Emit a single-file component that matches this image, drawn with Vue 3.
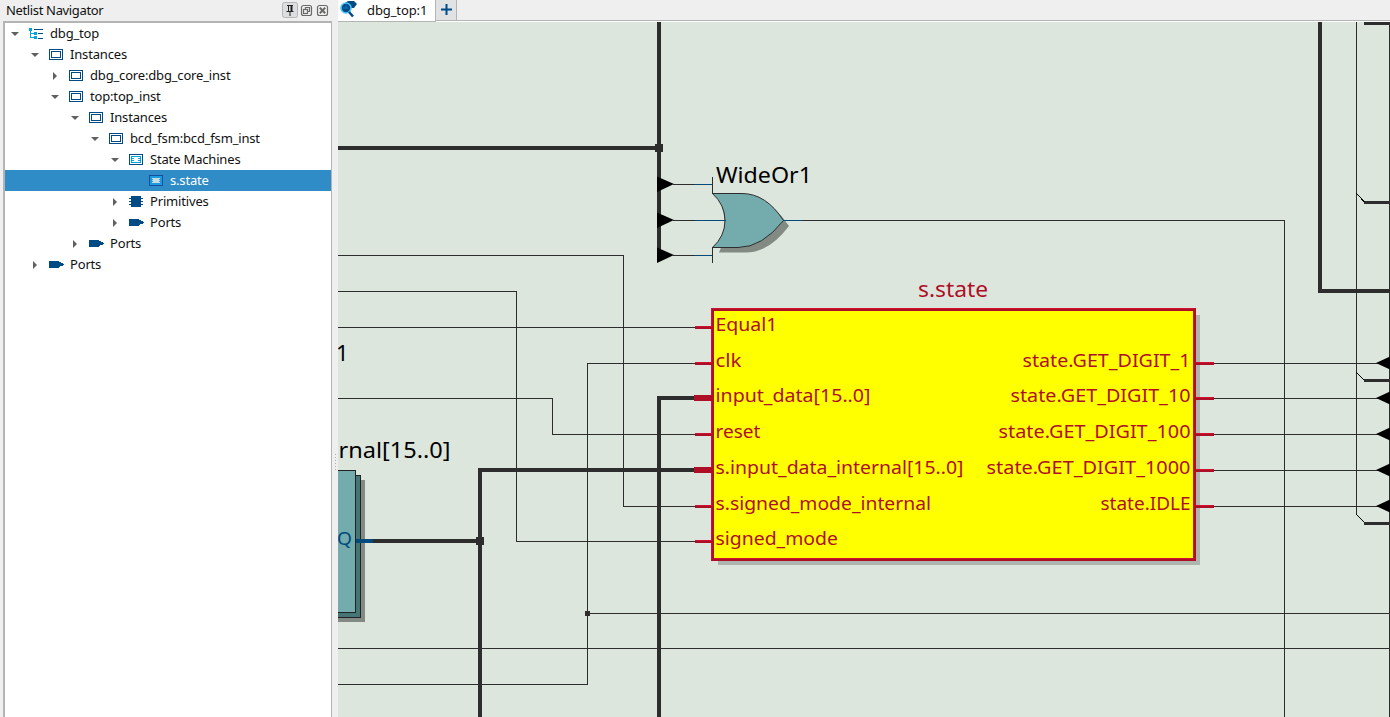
<script setup>
const tree = [
  { label: 'dbg_top', level: 0, open: true, icon: 'tree' },
  { label: 'Instances', level: 1, open: true, icon: 'inst' },
  { label: 'dbg_core:dbg_core_inst', level: 2, open: false, icon: 'inst' },
  { label: 'top:top_inst', level: 2, open: true, icon: 'inst' },
  { label: 'Instances', level: 3, open: true, icon: 'inst' },
  { label: 'bcd_fsm:bcd_fsm_inst', level: 4, open: true, icon: 'inst' },
  { label: 'State Machines', level: 5, open: true, icon: 'fsm' },
  { label: 's.state', level: 6, open: null, icon: 'state', selected: true },
  { label: 'Primitives', level: 5, open: false, icon: 'chip' },
  { label: 'Ports', level: 5, open: false, icon: 'port' },
  { label: 'Ports', level: 3, open: false, icon: 'port' },
  { label: 'Ports', level: 1, open: false, icon: 'port' },
]
const inputs = [
  { t: 'Equal1', y: 327, w: 62 },
  { t: 'clk', y: 363, w: 26 },
  { t: 'input_data[15..0]', y: 398, w: 155 },
  { t: 'reset', y: 434, w: 45 },
  { t: 's.input_data_internal[15..0]', y: 470, w: 248 },
  { t: 's.signed_mode_internal', y: 506, w: 215.5 },
  { t: 'signed_mode', y: 541, w: 122.5 },
].map((p) => ({ ...p, bus: p.t.includes('[') }))
const outputs = [
  { t: 'state.GET_DIGIT_1', y: 363, w: 168 },
  { t: 'state.GET_DIGIT_10', y: 398, w: 180 },
  { t: 'state.GET_DIGIT_100', y: 434, w: 192 },
  { t: 'state.GET_DIGIT_1000', y: 470, w: 204 },
  { t: 'state.IDLE', y: 506, w: 90 },
]
</script>

<template>
  <div class="app">
    <aside class="nav">
      <header class="nav-head">
        <span class="title">Netlist Navigator</span>
        <svg class="tools" width="52" height="21" viewBox="280 0 52 21">
          <rect x="282.5" y="2.500" width="15" height="15" rx="2" fill="#dcdee0" stroke="#b4b6b8" />
          <path d="M287 5.500h6M288.500 5.500v6M286.500 11.500h7M290 12v4" fill="none" stroke="#222" />
          <path d="M291.500 5v6" stroke="#222" stroke-width="2" />
          <g fill="none" stroke="#6a6a68" stroke-width="1.200">
            <rect x="301.500" y="5.500" width="10" height="10" rx="2" />
            <rect x="303.500" y="9.500" width="4" height="4" />
            <path d="M305.500 9V7.500h4v4H308" />
            <rect x="317.500" y="5.500" width="10" height="10" rx="2" />
            <path d="M319.800 7.800l5.400 5.400m0-5.400l-5.400 5.400" stroke-width="2" />
          </g>
        </svg>
      </header>
      <ul class="tree">
        <li v-for="(n, i) in tree" :key="i" :class="['row', 'l' + n.level, { selected: n.selected }]">
          <svg class="arrow" width="10" height="10" viewBox="0 0 10 10">
            <path v-if="n.open === true" d="M1 3h8L5 7z" fill="#606060" />
            <path v-else-if="n.open === false" d="M3 1v8l4-4z" fill="#606060" />
          </svg>
          <svg class="icon" width="15" height="12" viewBox="0 0 15 12" shape-rendering="crispEdges">
            <g v-if="n.icon === 'tree'">
              <path d="M1.500 2v8M2 5.500h3M2 9.500h3" stroke="#00a3e0" fill="none" />
              <path d="M5 1.500h9M9 5.500h5M9 10.500h5" stroke="#004a86" />
              <path d="M0 0h3v3H0zM5 4h3v3H5zM5 8h3v3H5z" fill="#00a3e0" />
            </g>
            <g v-else-if="n.icon === 'inst'" fill="#fff" stroke="#004a86">
              <rect x=".5" y=".5" width="13" height="10" />
              <rect x="2.500" y="2.500" width="9" height="6" />
            </g>
            <g v-else-if="n.icon === 'fsm'">
              <rect x=".5" y=".5" width="13" height="10" fill="#fff" stroke="#004a86" />
              <path d="M2.500 2.500h9v6h-9z" fill="#fff" stroke="#00a3e0" />
              <path d="M3 4.500h2M3 6.500h2M9 4.500h2M9 6.500h2" stroke="#00a3e0" />
            </g>
            <g v-else-if="n.icon === 'state'">
              <rect x=".5" y=".5" width="13" height="10" fill="#1b9be0" stroke="#1450a0" />
              <path d="M3 3h8v1h-1v1h1v1h-1v1h1v1H3V7h1V6H3V5h1V4H3z" fill="#c8dce6" />
            </g>
            <g v-else-if="n.icon === 'chip'" fill="#004a86">
              <path d="M2 0h10v11H2zM0 2h14v1H0zM0 5h14v1H0zM0 8h14v1H0z" />
            </g>
            <path v-else d="M0 2h10v1h2v1h2v1h1v1h-1v1h-3v1h-1v1H0z" fill="#004a86" />
          </svg>
          <span class="label">{{ n.label }}</span>
        </li>
      </ul>
    </aside>
    <div class="splitter">
      <svg width="6" height="18" viewBox="0 0 6 18" shape-rendering="crispEdges">
        <path d="M3.500 1v16" stroke="#b0b0b0" stroke-dasharray="1 2" />
      </svg>
    </div>
    <main class="view">
      <div class="tabs">
        <div class="tab">
          <svg width="22" height="20" viewBox="0 0 22 20">
            <path d="M7 3l3-2h6l3 3-3 4h-4z" fill="#004a86" />
            <circle cx="8" cy="8" r="5" fill="#004a86" stroke="#4cc3f5" stroke-width="1.600" />
            <path d="M4.500 8h6M8 4.500v4" stroke="#0a78b8" />
            <path d="M11 12l4 4.500" stroke="#004a86" stroke-width="2.500" />
          </svg>
          <span>dbg_top:1</span>
        </div>
        <div class="add">
          <svg width="11" height="11" viewBox="0 0 11 11"><path d="M5.500 0v11M0 5.500h11" stroke="#004a86" stroke-width="2" /></svg>
        </div>
        <div class="rest"></div>
      </div>
      <svg class="canvas" width="1052" height="695" viewBox="338 22 1052 695">
        <g shape-rendering="crispEdges" fill="none" stroke="#2d2d2d">
          <path d="M338 255.500H623.500V506.500H695M338 291.500H516.500V541.500H695M338 327.500H695M695 363.500H587.500V684.500H338M338 398.500H552.500V434.500H695M587 613.500H1390M338 648.500H1390M673 184.500H712M673 220.500H725M673 255.500H712M802 220.500H1284.500V717M1356.500 22V515M1389.500 22V717" />
          <path d="M1214 363.500H1378M1214 398.500H1378M1214 434.500H1378M1214 470.500H1378M1214 506.500H1378" />
          <path stroke-width="4" d="M659 22V260M338 148H659M372 541H480M480 717V470H695M659 717V398H695M1320 22V291H1390" />
          <path stroke-width="3" d="M1364 23.500H1390M1364 202.500H1390M1364 380.500H1390M1364 523.500H1390" />
          <path d="M1356.500 193.500L1364.500 202M1356.500 372.500L1364.500 380.500M1356.500 514.500L1364.500 522.500" stroke="#000" />
        </g>
        <path fill="#2d2d2d" d="M655 144h8v8h-8zM476 537h8v8h-8zM585 611h5v5h-5z" />
        <path v-for="y in [184, 220, 255]" :key="y" :d="`M657 ${y - 7.5}L674 ${y}L657 ${y + 8}z`" />
        <path v-for="o in outputs" :key="o.y" :d="`M1390 ${o.y - 6.5}L1376 ${o.y}L1390 ${o.y + 6.5}z`" />

        <path d="M719 252.500Q731 226 719 199H749Q771 199 789 226Q769 252.500 746 252.500Z" fill="#828a83" />
        <path d="M712.500 193.500H742Q766 193.500 783.500 220.500Q762 247.500 738 247.500H712.500Q725 236 725 220.500Q725 205 712.500 193.500Z" fill="#74acad" stroke="#2d2d2d" />
        <g shape-rendering="crispEdges">
          <path d="M712.500 177V194M712.500 247V263" stroke="#2d2d2d" />
          <path d="M695 184.500H712M695 220.500H726M695 255.500H712M783 220.500H802" stroke="#004a7c" />
          <path fill="#828a83" d="M338 480H365V622H338z" />
          <path fill="#467575" stroke="#222" d="M330 475.500H360.500V617.500H330z" />
          <path fill="#74acad" stroke="#222" d="M330 470.500H355.500V612.500H330z" />
          <path fill="#004a7c" d="M356 539h17v4h-17z" />
          <path fill="#aeb5ae" d="M718 315H1200V565H718z" />
          <path fill="#ff0" stroke="#ae0e26" stroke-width="3" d="M712.500 309.500H1194.500V559.500H712.500z" />
          <path fill="none" stroke="#cf1232" d="M711.500 560V308.500H1195M714 558.500H1193.500V311" />
          <g v-for="p in inputs" :key="p.t">
            <path v-if="p.bus" :d="`M694 ${p.y - 3}h18v6h-18z`" fill="#ae0e26" />
            <template v-else>
              <path :d="`M695 ${p.y - 1}h17v3h-17z`" fill="#ae0e26" />
              <path :d="`M695 ${p.y - 1}h17v1h-17z`" fill="#cf1232" />
            </template>
          </g>
          <g v-for="p in outputs" :key="p.t">
            <path :d="`M1196 ${p.y - 1}h18v3h-18z`" fill="#ae0e26" />
            <path :d="`M1196 ${p.y - 1}h17v1h-17z`" fill="#cf1232" />
          </g>
        </g>
        <g class="pins">
          <text v-for="p in inputs" :key="p.t" x="715.5" :y="p.y + 4" :textLength="p.w" lengthAdjust="spacingAndGlyphs">{{ p.t }}</text>
          <text v-for="p in outputs" :key="p.t" :x="1190.5 - p.w" :y="p.y + 4" :textLength="p.w" lengthAdjust="spacingAndGlyphs">{{ p.t }}</text>
          <text class="q" x="337" y="545" textLength="15" lengthAdjust="spacingAndGlyphs">Q</text>
        </g>
        <g class="names">
          <text x="716" y="183" textLength="96" lengthAdjust="spacingAndGlyphs">WideOr1</text>
          <text class="red" x="918" y="297" textLength="70" lengthAdjust="spacingAndGlyphs">s.state</text>
          <text x="336" y="361">1</text>
          <text x="338.5" y="458" textLength="112" lengthAdjust="spacingAndGlyphs">rnal[15..0]</text>
        </g>
      </svg>
    </main>
  </div>
</template>

<style>
body { margin: 0; overflow: hidden; }
</style>

<style scoped>
.app { display: flex; width: 1390px; height: 717px; background: #efefef; font: 13px "Noto Sans", sans-serif; color: #111; overflow: hidden; }
.nav { box-sizing: border-box; width: 332px; display: flex; flex-direction: column; }
.nav-head { display: flex; justify-content: space-between; height: 21px; padding-left: 6px; }
.title { line-height: 21px; letter-spacing: -0.350px; }
.tree { box-sizing: border-box; flex: 1; margin: 0 0 0 3px; padding: 0; list-style: none; background: #fff; border: solid #b4b4b4; border-width: 2px 1px 0 2px; }
.row { display: flex; align-items: center; height: 21px; line-height: 21px; white-space: nowrap; letter-spacing: -0.170px; }
.l0 { padding-left: 5px; } .l1 { padding-left: 25px; } .l2 { padding-left: 45px; } .l3 { padding-left: 65px; }
.l4 { padding-left: 85px; } .l5 { padding-left: 105px; } .l6 { padding-left: 125px; }
.icon { margin: 0 6px 0 9px; }
.selected { background: #308cc6; color: #fff; }
.splitter { display: flex; width: 6px; padding-top: 453px; box-sizing: border-box; }
.view { width: 1052px; display: flex; flex-direction: column; }
.tabs { display: flex; height: 22px; }
.tab { box-sizing: border-box; display: flex; width: 98px; height: 22px; background: #fff; border-right: 1px solid #b4b4b4; border-bottom: 1px solid #b4b4b4; line-height: 21px; gap: 7px; letter-spacing: -0.100px; }
.add { box-sizing: border-box; display: flex; align-items: center; justify-content: center; width: 21px; height: 21px; background: #e0e2e4; border-right: 1px solid #b4b4b4; border-bottom: 1px solid #b4b4b4; box-shadow: 0 1px #fff; }
.add svg { margin-top: -1px; }
.rest { box-sizing: border-box; flex: 1; height: 21px; border-bottom: 1px solid #b4b4b4; box-shadow: 0 1px #fff; }
.canvas { display: block; background: #dce6dd; }
.pins { font-size: 18.500px; fill: #ae0e26; }
.q { fill: #004a7c; }
.names { font-size: 22px; fill: #000; }
.red { fill: #ae0e26; }
</style>
